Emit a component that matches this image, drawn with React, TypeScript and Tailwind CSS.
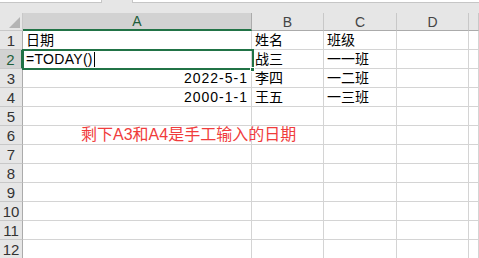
import React from "react";

const FONT = { fontFamily: '"Liberation Sans", "Noto Sans CJK SC", sans-serif' };

const colW = ["w-[229px]", "w-[72px]", "w-[73px]", "w-[72px]", "flex-1"];

type Cell = { t?: string; right?: boolean };
const data: Cell[][] = [
  [{ t: "日期" }, { t: "姓名" }, { t: "班级" }, {}, {}],
  [{ t: "=TODAY()" }, { t: "战三" }, { t: "一一班" }, {}, {}],
  [{ t: "2022-5-1", right: true }, { t: "李四" }, { t: "一二班" }, {}, {}],
  [{ t: "2000-1-1", right: true }, { t: "王五" }, { t: "一三班" }, {}, {}],
  [{}, {}, {}, {}, {}],
  [{}, {}, {}, {}, {}],
  [{}, {}, {}, {}, {}],
  [{}, {}, {}, {}, {}],
  [{}, {}, {}, {}, {}],
  [{}, {}, {}, {}, {}],
  [{}, {}, {}, {}, {}],
  [{}, {}, {}, {}, {}],
];

export default function App() {
  return (
    <div className="w-[479px] h-[258px] overflow-hidden bg-white text-[14px] text-black" style={FONT}>
      {/* top strip */}
      <div className="h-[13px] bg-[#e6e6e6] flex items-start">
        <div className="w-[102px] h-[3px] bg-white border-r border-b border-[#c6c6c6]" />
        <div className="w-[30px]" />
        <div className="flex-1 h-[3px] bg-white border-l border-b border-[#c6c6c6]" />
      </div>
      {/* column header */}
      <div className="flex h-[18px]">
        <div className="w-[23px] bg-[#e6e6e6] border-r border-b border-[#c8c8c8] relative">
          <div
            className="absolute right-[2px] bottom-[2px] w-0 h-0 border-l-[11px] border-l-transparent border-b-[11px] border-b-[#b4b4b4]"
          />
        </div>
        {["A", "B", "C", "D", ""].map((h, i) => (
          <div
            key={i}
            className={`${colW[i]} flex items-center justify-center leading-none ${
              i === 0
                ? "bg-[#d2d2d2] border-b-2 border-b-[#217346] border-r border-r-[#ababab] text-[#1e5e3b]"
                : "bg-[#e6e6e6] border-b border-[#ababab] border-r border-r-[#c8c8c8] text-[#444]"
            }`}
          >
            {h}
          </div>
        ))}
      </div>
      {/* rows */}
      <div className="relative">
        {data.map((row, r) => (
          <div key={r} className="flex h-[19px]">
            <div
              className={`w-[23px] flex items-center justify-center border-b border-[#c8c8c8] text-[15px] leading-none ${
                r === 1
                  ? "bg-[#d2d2d2] border-r-2 border-r-[#217346] text-[#1e5e3b]"
                  : "bg-[#e6e6e6] border-r border-r-[#ababab] text-[#333]"
              }`}
            >
              {r + 1}
            </div>
            {row.map((c, i) => (
              <div
                key={i}
                className={`${colW[i]} border-r border-b border-[#d4d4d4] flex items-center leading-none whitespace-nowrap ${
                  c.right ? "justify-end pr-[3px] tracking-[1px]" : "pl-[3px]"
                } ${r === 1 && i === 0 ? "tracking-[0.3px]" : ""} ${
                  r === 5 && i === 0 ? "overflow-visible relative z-10" : "overflow-hidden"
                }`}
              >
                {r === 5 && i === 0 ? (
                  <span className="pl-[55px] text-[16px] text-[#f03c3c]">剩下A3和A4是手工输入的日期</span>
                ) : (
                  c.t
                )}
                {r === 1 && i === 0 && <span className="inline-block w-px h-[15px] bg-black ml-[1px]" />}
              </div>
            ))}
          </div>
        ))}
        {/* active cell A2 */}
        <div className="absolute left-[22px] top-[18px] w-[232px] h-[21px] border-2 border-[#217346] pointer-events-none" />
        <div className="absolute left-[250px] top-[36px] w-[5px] h-[5px] bg-[#217346] border border-white pointer-events-none" />
      </div>
    </div>
  );
}
